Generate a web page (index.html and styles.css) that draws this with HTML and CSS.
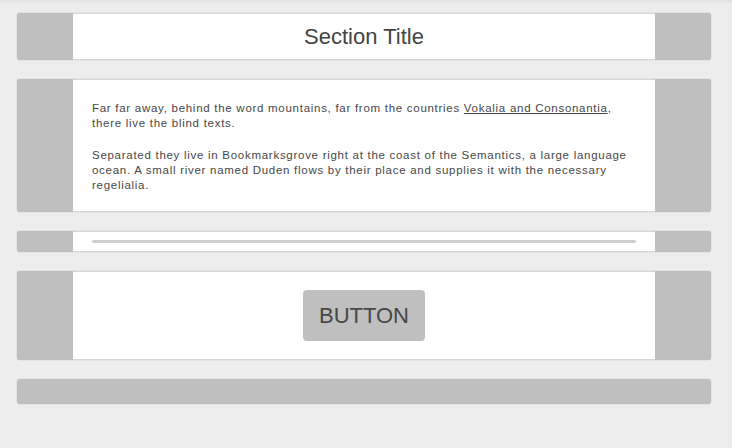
FILE: index.html
```html
<!DOCTYPE html>
<html>
<head>
<meta charset="utf-8">
<link rel="stylesheet" href="styles.css">
</head>
<body>
<div class="page">
  <section class="panel panel-title">
    <div class="side"></div>
    <div class="main"><h1 class="title">Section Title</h1></div>
    <div class="side"></div>
  </section>
  <section class="panel panel-text">
    <div class="side"></div>
    <div class="main text">
      <p>Far far away, behind the word mountains, far from the countries <a href="#">Vokalia and Consonantia</a>, there live the blind texts.</p>
      <p>Separated they live in Bookmarksgrove right at the coast of the Semantics, a large language ocean. A small river named Duden flows by their place and supplies it with the necessary regelialia.</p>
    </div>
    <div class="side"></div>
  </section>
  <section class="panel panel-rule">
    <div class="side"></div>
    <div class="main rule-wrap"><div class="rule"></div></div>
    <div class="side"></div>
  </section>
  <section class="panel panel-button">
    <div class="side"></div>
    <div class="main button-wrap"><button class="btn">BUTTON</button></div>
    <div class="side"></div>
  </section>
  <section class="panel panel-footer"></section>
</div>
</body>
</html>
```
FILE: styles.css
```css
html, body {
  margin: 0;
  padding: 0;
}
body {
  background: #ededed;
  font-family: "Liberation Sans", Arial, sans-serif;
  color: #444;
  width: 732px;
  height: 448px;
  box-shadow: inset 0 3px 3px -1px rgba(0, 0, 0, 0.05);
}
.page {
  padding: 13px 21px 0 17px;
  display: flex;
  flex-direction: column;
  gap: 19px;
}
.panel {
  display: grid;
  grid-template-columns: 56px 1fr 56px;
  border-radius: 3px;
  overflow: hidden;
  background: #bfbfbf;
  box-shadow: 0 0 0 0.5px rgba(0,0,0,0.08);
}
.side {
  background: #bfbfbf;
}
.main {
  background: #fff;
  border-top: 1px solid #d6d6d6;
  border-bottom: 1px solid #d6d6d6;
}
.panel-title { height: 47px; }
.panel-title .main {
  display: flex;
  align-items: center;
  justify-content: center;
}
.title {
  margin: 0;
  font-weight: normal;
  font-size: 22px;
  color: #444;
}
.panel-text { height: 133px; }
.text {
  padding: 21px 19px 0 19px;
  font-size: 11.5px;
  letter-spacing: 0.72px;
  line-height: 15px;
  color: #474747;
}
.text p {
  margin: 0 0 17px 0;
}
.text a {
  color: #474747;
  text-decoration: underline;
}
.panel-rule { height: 21px; }
.rule-wrap {
  padding: 8px 19px 0 19px;
}
.rule {
  height: 3px;
  border-radius: 2px;
  background: #cfcfcf;
}
.panel-button { height: 89px; }
.button-wrap {
  display: flex;
  align-items: center;
  justify-content: center;
}
.btn {
  font-family: "Liberation Sans", Arial, sans-serif;
  font-size: 22px;
  color: #474747;
  background: #bfbfbf;
  border: none;
  border-radius: 4px;
  width: 122px;
  height: 51px;
  padding: 0;
}
.panel-footer {
  display: block;
  height: 25px;
}
```
